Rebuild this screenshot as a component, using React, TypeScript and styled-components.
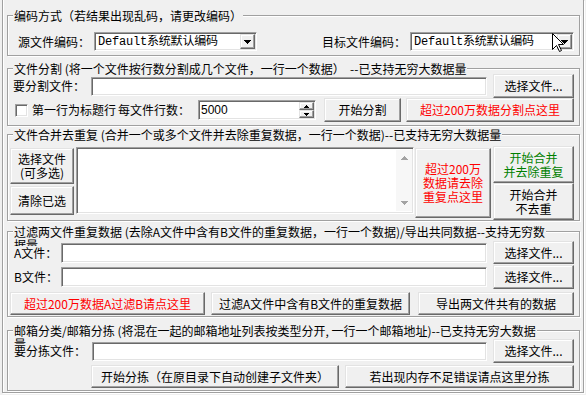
import React from "react";
import styled, { createGlobalStyle, css } from "styled-components";

const GlobalStyle = createGlobalStyle`
  html, body {
    margin: 0;
    padding: 0;
    background: #f0f0f0;
  }
  body {
    font-family: "Noto Sans CJK SC", "Noto Sans", sans-serif;
    font-size: 12px;
    color: #000;
  }
`;

const raised = css`
  background: #f0f0f0;
  border: 1px solid;
  border-color: #e3e3e3 #696969 #696969 #e3e3e3;
  box-shadow: inset -1px -1px 0 #a0a0a0, inset 1px 1px 0 #fff;
`;

const sunken = css`
  background: #fff;
  border: 1px solid;
  border-color: #a0a0a0 #fff #fff #a0a0a0;
  box-shadow: inset 1px 1px 0 #696969, inset -1px -1px 0 #e3e3e3;
`;

const Window = styled.div`
  width: 586px;
  height: 395px;
  padding: 0 2px;
  box-sizing: border-box;
  overflow: hidden;
  background: #f0f0f0;
`;

const Frame = styled.div`
  height: 393px;
  box-sizing: border-box;
  border: 1px solid #a0a0a0;
  border-top: none;
  box-shadow: inset 1px 0 0 #fff, 1px 1px 0 #fff;
  padding: 15px 3px 0 4px;
`;

const Group = styled.section<{ $h: number; $mt?: number }>`
  box-sizing: border-box;
  height: ${(p) => p.$h}px;
  margin-top: ${(p) => p.$mt ?? 0}px;
  border: 1px solid #a0a0a0;
  box-shadow: inset 1px 1px 0 #fff, 1px 1px 0 #fff;
  display: flex;
  flex-direction: column;
`;

const Title = styled.div`
  align-self: flex-start;
  height: 13px;
  line-height: 13px;
  margin: -7px 0 -6px 5px;
  padding: 0 1px;
  background: #f0f0f0;
  white-space: pre;
`;

const Row = styled.div<{ $h: number; $mt?: number; $pl?: number; $top?: boolean }>`
  flex: none;
  display: flex;
  align-items: ${(p) => (p.$top ? "flex-start" : "center")};
  height: ${(p) => p.$h}px;
  margin-top: ${(p) => p.$mt ?? 0}px;
  padding-left: ${(p) => p.$pl ?? 0}px;
`;

const Label = styled.span<{ $w: number; $ml?: number }>`
  flex: none;
  position: relative;
  width: ${(p) => p.$w}px;
  margin-left: ${(p) => p.$ml ?? 0}px;
  height: 14px;
  line-height: 14px;
  background: #f0f0f0;
  white-space: nowrap;
`;

const Button = styled.button<{ $w: number; $h: number; $ml?: number; $mt?: number; $color?: string }>`
  ${raised};
  flex: none;
  box-sizing: border-box;
  width: ${(p) => p.$w}px;
  height: ${(p) => p.$h}px;
  margin: ${(p) => p.$mt ?? 0}px 0 0 ${(p) => p.$ml ?? 0}px;
  padding: 0;
  display: flex;
  align-items: center;
  justify-content: center;
  text-align: center;
  font-family: "Noto Sans CJK SC", "Noto Sans", sans-serif;
  font-size: 12px;
  line-height: 14px;
  white-space: nowrap;
  color: ${(p) => p.$color ?? "#000"};
`;

const Input = styled.div<{ $w: number; $h: number }>`
  ${sunken};
  flex: none;
  box-sizing: border-box;
  width: ${(p) => p.$w}px;
  height: ${(p) => p.$h}px;
`;

const Combo = styled.div<{ $w: number }>`
  ${sunken};
  position: relative;
  flex: none;
  box-sizing: border-box;
  width: ${(p) => p.$w}px;
  height: 19px;
  padding: 1px;
  display: flex;
  align-items: center;
  font-family: "Liberation Mono", "Noto Sans CJK SC", monospace;
  font-size: 12px;
`;

const ComboText = styled.span`
  flex: 1;
  padding-left: 2px;
  line-height: 14px;
  white-space: nowrap;
  overflow: hidden;
  letter-spacing: -0.2px;
`;

const DropButton = styled.span`
  ${raised};
  flex: none;
  box-sizing: border-box;
  width: 15px;
  height: 15px;
  display: flex;
  align-items: center;
  justify-content: center;
`;

const Cursor = styled.svg`
  position: absolute;
  left: 141px;
  top: 0;
`;

const Spin = styled.div<{ $w: number }>`
  ${sunken};
  flex: none;
  box-sizing: border-box;
  width: ${(p) => p.$w}px;
  height: 20px;
  padding: 1px;
  display: flex;
`;

const SpinText = styled.span`
  flex: 1;
  padding-left: 1px;
  line-height: 16px;
  font-family: "Liberation Sans", sans-serif;
`;

const SpinButtons = styled.span`
  flex: none;
  width: 15px;
  display: flex;
  flex-direction: column;
`;

const SpinCell = styled.span`
  ${raised};
  flex: 1;
  box-sizing: border-box;
  display: flex;
  align-items: center;
  justify-content: center;
`;

const CheckBox = styled.span`
  ${sunken};
  flex: none;
  box-sizing: border-box;
  width: 13px;
  height: 13px;
`;

const Column = styled.div<{ $ml?: number; $mt?: number; $gap?: number }>`
  flex: none;
  display: flex;
  flex-direction: column;
  gap: ${(p) => p.$gap ?? 0}px;
  margin: ${(p) => p.$mt ?? 0}px 0 0 ${(p) => p.$ml ?? 0}px;
`;

const ListBox = styled.div<{ $w: number; $h: number; $ml?: number; $mt?: number }>`
  ${sunken};
  flex: none;
  box-sizing: border-box;
  width: ${(p) => p.$w}px;
  height: ${(p) => p.$h}px;
  margin: ${(p) => p.$mt ?? 0}px 0 0 ${(p) => p.$ml ?? 0}px;
  padding: 2px 1px 2px 2px;
  display: flex;
  justify-content: flex-end;
`;

const ScrollBar = styled.div`
  width: 16px;
  background: #f7f7f7;
  display: flex;
  flex-direction: column;
  justify-content: space-between;
`;

const ScrollArrow = styled.span`
  height: 16px;
  display: flex;
  align-items: center;
  justify-content: center;
`;

const Arrow = ({ up, color = "#000" }: { up?: boolean; color?: string }) => (
  <svg width="7" height="4" viewBox="0 0 7 4" shapeRendering="crispEdges" style={{ transform: up ? "scaleY(-1)" : undefined }}>
    <path d="M0 0h7v1H0z M1 1h5v1H1z M2 2h3v1H2z M3 3h1v1H3z" fill={color} />
  </svg>
);

const SmallArrow = ({ up }: { up?: boolean }) => (
  <svg width="5" height="3" viewBox="0 0 5 3" shapeRendering="crispEdges" style={{ transform: up ? "scaleY(-1)" : undefined }}>
    <path d="M0 0h5v1H0z M1 1h3v1H1z M2 2h1v1H2z" fill="#000" />
  </svg>
);

const ComboBox = ({ w, withCursor }: { w: number; withCursor?: boolean }) => (
  <Combo $w={w}>
    <ComboText>Default系统默认编码</ComboText>
    <DropButton>
      <Arrow />
    </DropButton>
    {withCursor && (
      <Cursor width="12" height="19" viewBox="0 0 12 19">
        <polygon
          points="0.5,0.5 0.5,16.5 4.5,12.5 7.5,18.5 9.5,17.5 6.5,11.5 11.5,11.5"
          fill="#fff"
          stroke="#000"
          strokeWidth="1"
        />
      </Cursor>
    )}
  </Combo>
);

const PickButton = ({ h }: { h: number }) => (
  <Button $w={81} $h={h} $ml={6}>
    选择文件...
  </Button>
);

export default function App() {
  return (
    <Window>
      <GlobalStyle />
      <Frame>
        <Group $h={41}>
          <Title>编码方式（若结果出现乱码，请更改编码）</Title>
          <Row $h={19} $mt={16} $pl={10}>
            <Label $w={76}>源文件编码：</Label>
            <ComboBox w={163} />
            <Label $w={88} $ml={65}>目标文件编码：</Label>
            <ComboBox w={164} withCursor />
          </Row>
        </Group>

        <Group $h={58} $mt={12}>
          <Title>文件分割 (将一个文件按行数分割成几个文件，一行一个数据）  --已支持无穷大数据量</Title>
          <Row $h={24} $mt={5} $pl={5}>
            <Label $w={78}>要分割文件：</Label>
            <Input $w={396} $h={19} />
            <PickButton h={24} />
          </Row>
          <Row $h={24} $pl={7}>
            <CheckBox />
            <Label $w={86} $ml={4}>第一行为标题行</Label>
            <Label $w={80}>每文件行数：</Label>
            <Spin $w={118}>
              <SpinText>5000</SpinText>
              <SpinButtons>
                <SpinCell>
                  <SmallArrow up />
                </SpinCell>
                <SpinCell>
                  <SmallArrow />
                </SpinCell>
              </SpinButtons>
            </Spin>
            <Button $w={77} $h={24} $ml={8}>开始分割</Button>
            <Button $w={168} $h={24} $ml={5} $color="#ff0000">超过200万数据分割点这里</Button>
          </Row>
        </Group>

        <Group $h={87} $mt={8}>
          <Title>文件合并去重复 (合并一个或多个文件并去除重复数据，一行一个数据)--已支持无穷大数据量</Title>
          <Row $h={74} $mt={11} $pl={2} $top>
            <Column $mt={2} $gap={2}>
              <Button $w={64} $h={36}>
                选择文件
                <br />
                (可多选)
              </Button>
              <Button $w={64} $h={29}>清除已选</Button>
            </Column>
            <ListBox $w={338} $h={67} $ml={2} $mt={1}>
              <ScrollBar>
                <ScrollArrow>
                  <Arrow up color="#a3a3a3" />
                </ScrollArrow>
                <ScrollArrow>
                  <Arrow color="#a3a3a3" />
                </ScrollArrow>
              </ScrollBar>
            </ListBox>
            <Button $w={76} $h={70} $ml={1} $mt={2} $color="#ff0000">
              超过200万
              <br />
              数据请去除
              <br />
              重复点这里
            </Button>
            <Column $ml={2}>
              <Button $w={81} $h={37} $color="#008000">
                开始合并
                <br />
                并去除重复
              </Button>
              <Button $w={81} $h={37}>
                开始合并
                <br />
                不去重
              </Button>
            </Column>
          </Row>
        </Group>

        <Group $h={86} $mt={10}>
          <Title>
            过滤两文件重复数据 (去除A文件中含有B文件的重复数据，一行一个数据)/导出共同数据--支持无穷数
            <br />
            据量
          </Title>
          <Row $h={23} $mt={9} $pl={6}>
            <Label $w={47}>A文件：</Label>
            <Input $w={426} $h={20} />
            <PickButton h={23} />
          </Row>
          <Row $h={24} $mt={1} $pl={6}>
            <Label $w={47}>B文件：</Label>
            <Input $w={426} $h={20} />
            <PickButton h={24} />
          </Row>
          <Row $h={23} $mt={3} $pl={2}>
            <Button $w={195} $h={23} $color="#ff0000">超过200万数据A过滤B请点这里</Button>
            <Button $w={199} $h={23} $ml={6}>过滤A文件中含有B文件的重复数据</Button>
            <Button $w={156} $h={23} $ml={8}>导出两文件共有的数据</Button>
          </Row>
        </Group>

        <Group $h={61} $mt={13}>
          <Title>
            邮箱分类/邮箱分拣 (将混在一起的邮箱地址列表按类型分开, 一行一个邮箱地址)--已支持无穷大数据
            <br />
            量
          </Title>
          <Row $h={24} $mt={8} $pl={6}>
            <Label $w={78}>要分拣文件：</Label>
            <Input $w={395} $h={19} />
            <PickButton h={24} />
          </Row>
          <Row $h={23} $mt={2} $pl={83}>
            <Button $w={248} $h={23}>开始分拣（在原目录下自动创建子文件夹）</Button>
            <Button $w={229} $h={23} $ml={6}>若出现内存不足错误请点这里分拣</Button>
          </Row>
        </Group>
      </Frame>
    </Window>
  );
}
